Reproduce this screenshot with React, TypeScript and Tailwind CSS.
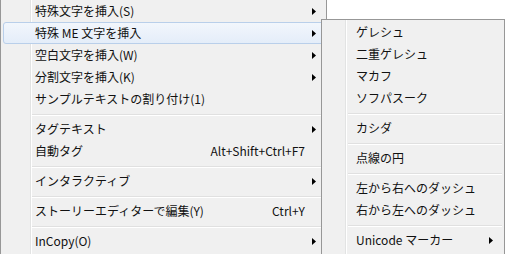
import React from "react";

const Arrow = () => (
  <svg width="4" height="7" viewBox="0 0 4 7" className="block">
    <path d="M0 0 L4 3.5 L0 7 Z" fill="#000" />
  </svg>
);

type Item =
  | { sep: true }
  | { sep?: false; label: string; shortcut?: string; arrow?: boolean; hi?: boolean };

const mainItems: Item[] = [
  { label: "特殊文字を挿入(S)", arrow: true },
  { label: "特殊 ME 文字を挿入", arrow: true, hi: true },
  { label: "空白文字を挿入(W)", arrow: true },
  { label: "分割文字を挿入(K)", arrow: true },
  { label: "サンプルテキストの割り付け(1)" },
  { sep: true },
  { label: "タグテキスト", arrow: true },
  { label: "自動タグ", shortcut: "Alt+Shift+Ctrl+F7" },
  { sep: true },
  { label: "インタラクティブ", arrow: true },
  { sep: true },
  { label: "ストーリーエディターで編集(Y)", shortcut: "Ctrl+Y" },
  { sep: true },
  { label: "InCopy(O)", arrow: true },
];

const subItems: Item[] = [
  { label: "ゲレシュ" },
  { label: "二重ゲレシュ" },
  { label: "マカフ" },
  { label: "ソフパスーク" },
  { sep: true },
  { label: "カシダ" },
  { sep: true },
  { label: "点線の円" },
  { sep: true },
  { label: "左から右へのダッシュ" },
  { label: "右から左へのダッシュ" },
  { sep: true },
  { label: "Unicode マーカー", arrow: true },
];

function Rows({ items, sub }: { items: Item[]; sub?: boolean }) {
  return (
    <div className="flex flex-col">
      {items.map((it, i) =>
        it.sep ? (
          <div key={i} className={`flex h-[8px] flex-col pt-[4px] ${sub ? "ml-[26px] mr-[2px]" : "ml-[31px] mr-[2px]"}`}>
            <div className="h-[1px] bg-[#e0e0e0]" />
            <div className="h-[1px] bg-white" />
          </div>
        ) : (
          <div
            key={i}
            className={`mx-[2px] flex h-[22px] items-center rounded-[3px] border pl-[31px] ${
              sub ? "pr-[8px]" : "pr-[7px]"
            } ${
              it.hi
                ? "border-[#b9cfea] bg-gradient-to-b from-[#f2f6fc] to-[#e4edf9]"
                : "border-transparent"
            }`}
          >
            <span className="flex-1 whitespace-nowrap leading-[20px]">{it.label}</span>
            {it.shortcut && (
              <span className="mr-[11px] whitespace-nowrap leading-[20px]">{it.shortcut}</span>
            )}
            {it.arrow && <Arrow />}
          </div>
        )
      )}
    </div>
  );
}

export default function App() {
  return (
    <div className="relative flex h-[254px] w-[505px] overflow-hidden bg-white font-['Noto_Sans_CJK_JP','Noto_Sans',sans-serif] text-[12px] text-[#111]">
      <div className="h-[254px] w-[327px] border-l border-r border-[#979797] bg-[linear-gradient(to_right,#f0f0f0_29px,#e2e3e3_29px,#e2e3e3_30px,#ffffff_30px,#ffffff_31px,#f0f0f0_31px)]">
        <Rows items={mainItems} />
      </div>
      <div className="absolute left-[321px] top-[19px] h-[240px] w-[184px] border border-[#979797] bg-[linear-gradient(to_right,#f0f0f0_23px,#e2e3e3_23px,#e2e3e3_24px,#ffffff_24px,#ffffff_25px,#f0f0f0_25px)] pt-[1px]">
        <Rows items={subItems} sub />
      </div>
    </div>
  );
}
